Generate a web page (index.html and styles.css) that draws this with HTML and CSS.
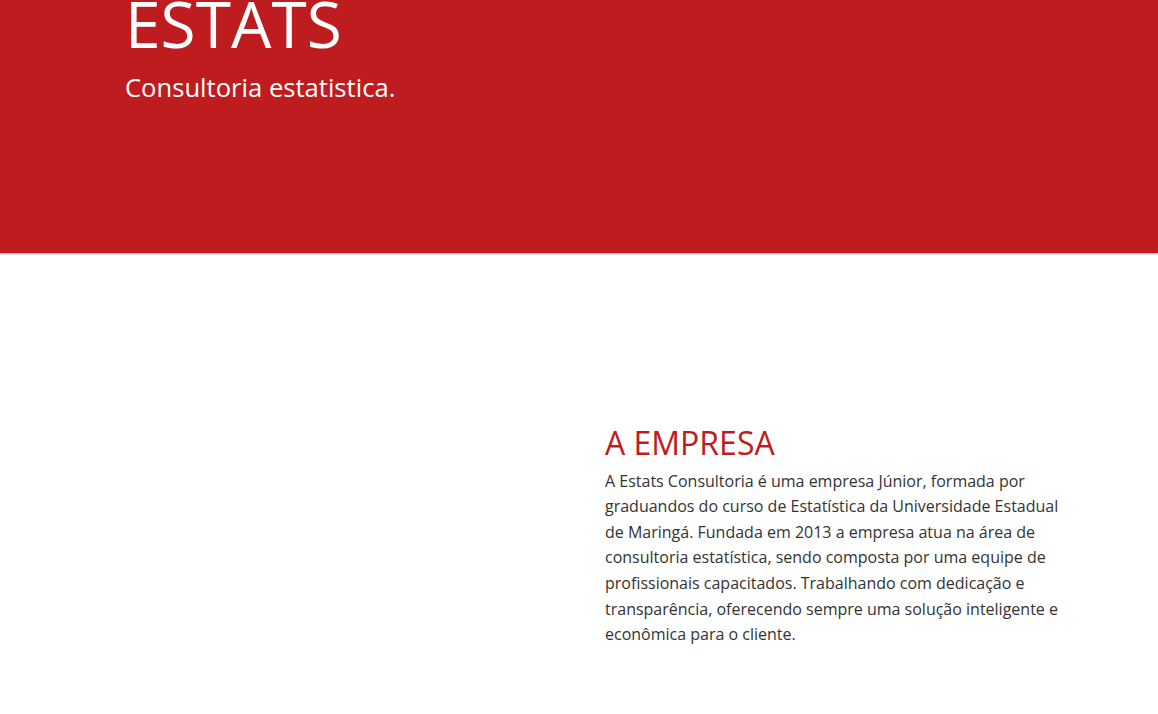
FILE: index.html
```html
<!DOCTYPE html>
<html lang="pt">
<head>
<meta charset="utf-8">
<title>Estats Consultoria</title>
<link rel="stylesheet" href="styles.css">
</head>
<body>
<header class="hero">
  <div class="container">
    <h1 class="hero-title">ESTATS</h1>
    <p class="hero-sub">Consultoria estatistica.</p>
  </div>
</header>
<section class="about">
  <div class="container about-row">
    <div class="about-col about-left"></div>
    <div class="about-col about-right">
      <h2 class="about-title">A EMPRESA</h2>
      <p class="about-text">A Estats Consultoria é uma empresa Júnior, formada por graduandos do curso de Estatística da Universidade Estadual de Maringá. Fundada em 2013 a empresa atua na área de consultoria estatística, sendo composta por uma equipe de profissionais capacitados. Trabalhando com dedicação e transparência, oferecendo sempre uma solução inteligente e econômica para o cliente.</p>
    </div>
  </div>
</section>
</body>
</html>
```

FILE: styles.css
```css
html, body {
  margin: 0;
  padding: 0;
  background: #ffffff;
  font-family: "Open Sans", "Liberation Sans", sans-serif;
  overflow: hidden;
}

.container {
  width: 960px;
  margin: 0 auto;
  box-sizing: border-box;
  padding-left: 26px;
}

.hero {
  background: #be1c1e;
  height: 253px;
  box-sizing: border-box;
  overflow: hidden;
  box-shadow: 0 1px 2px rgba(0, 0, 0, 0.35);
  position: relative;
  z-index: 1;
}

.hero-title {
  margin: -20px 0 0 0;
  font-size: 64px;
  font-weight: 400;
  line-height: 1.362;
  color: #ffffff;
}

.hero-sub {
  margin: 4px 0 0 0;
  font-size: 25.6px;
  line-height: 1.362;
  color: #ffffff;
}

.about {
  padding-top: 168px;
  padding-bottom: 60px;
}

.about-row {
  display: grid;
  grid-template-columns: 480px 460px;
}

.about-col {
  box-sizing: border-box;
}

.about-title {
  margin: 0 0 4px 0;
  font-size: 32px;
  font-weight: 400;
  line-height: 1.362;
  color: #be1c1e;
}

.about-text {
  margin: 0;
  font-size: 16px;
  line-height: 1.6;
  color: #333333;
}
```
